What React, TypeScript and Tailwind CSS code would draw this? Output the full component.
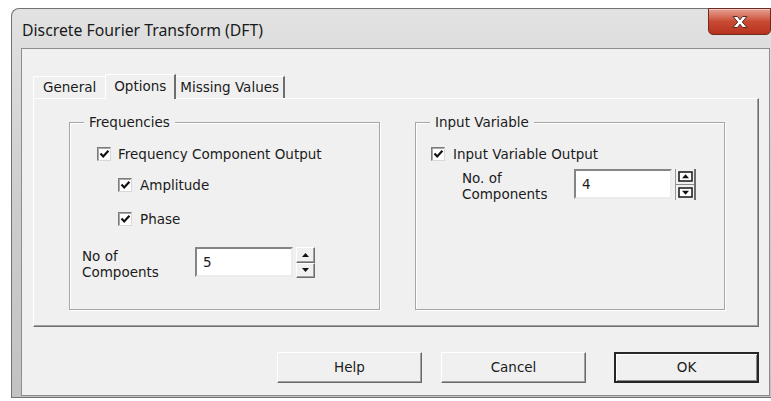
import React from "react";

const ui = "font-['DejaVu_Sans',sans-serif] text-[13.5px] text-[#1b1b1b]";

function CheckBox({ label, gap = "gap-[7px]" }: { label: string; gap?: string }) {
  return (
    <div className={`flex items-center h-[14px] ${gap}`}>
      <div className="w-[14px] h-[14px] shrink-0 bg-white border border-t-[#7b7b7b] border-l-[#7b7b7b] border-r-[#d8d8d8] border-b-[#d8d8d8] shadow-[inset_1px_1px_0_#a8a8a8] flex items-center justify-center">
        <svg width="11" height="10" viewBox="0 0 11 10">
          <path d="M1.5 4.6 L4.2 7.4 L9.4 1.8" fill="none" stroke="#111" strokeWidth="2.2" />
        </svg>
      </div>
      <span className="whitespace-nowrap leading-[16px]">{label}</span>
    </div>
  );
}

function NumberBox({ value }: { value: string }) {
  return (
    <div className="w-[98px] h-[30px] bg-white border-2 border-t-[#858585] border-l-[#858585] border-r-[#ececec] border-b-[#ececec] flex items-center pl-[6px]">
      {value}
    </div>
  );
}

// plain arrows, as drawn by the stock spin control
function SpinPlain() {
  const half =
    "flex-1 flex items-center justify-center bg-[#f0f0f0] border border-t-white border-l-white border-r-[#6d6d6d] border-b-[#6d6d6d] shadow-[inset_-1px_-1px_0_#a0a0a0]";
  return (
    <div className="w-[19px] h-[31px] flex flex-col">
      <div className={half}>
        <svg width="7" height="4" viewBox="0 0 7 4">
          <path d="M3.5 0 L7 4 L0 4 Z" fill="#111" />
        </svg>
      </div>
      <div className={half}>
        <svg width="7" height="4" viewBox="0 0 7 4">
          <path d="M0 0 L7 0 L3.5 4 Z" fill="#111" />
        </svg>
      </div>
    </div>
  );
}

// boxed arrows, the themed variant on the right-hand group
function SpinBoxed() {
  const half = "flex-1 flex items-center justify-center";
  return (
    <div className="w-[21px] h-[31px] flex flex-col border-l border-[#9a9a9a] border-r-2 border-r-[#6d6d6d]">
      <div className={half}>
        <svg width="15" height="11" viewBox="0 0 15 11">
          <rect x="1" y="1" width="13" height="9" fill="#fff" stroke="#222" strokeWidth="1.6" />
          <path d="M7.5 3.2 L11 7.2 L4 7.2 Z" fill="#111" />
        </svg>
      </div>
      <div className="h-px bg-[#8a8a8a]" />
      <div className={half}>
        <svg width="15" height="11" viewBox="0 0 15 11">
          <rect x="1" y="1" width="13" height="9" fill="#fff" stroke="#222" strokeWidth="1.6" />
          <path d="M4 3.8 L11 3.8 L7.5 7.8 Z" fill="#111" />
        </svg>
      </div>
    </div>
  );
}

function GroupBox({ title, width, children }: { title: string; width: string; children: React.ReactNode }) {
  return (
    <div className={`relative h-[188px] ${width} border border-[#a6a6a6] shadow-[inset_1px_1px_0_#fff,1px_1px_0_#fff]`}>
      <span className="absolute -top-[9px] left-[14px] px-[5px] bg-[#f0f0f0] leading-[17px]">{title}</span>
      {children}
    </div>
  );
}

function DialogButton({ label, primary = false }: { label: string; primary?: boolean }) {
  return (
    <button
      className={
        primary
          ? "w-[145px] h-[31px] bg-[#f0f0f0] border-2 border-[#262626] shadow-[inset_1px_1px_0_#fff,inset_-1px_-1px_0_#8a8a8a]"
          : "w-[145px] h-[31px] bg-[#f0f0f0] border border-t-white border-l-white border-r-[#6a6a6a] border-b-[#6a6a6a] shadow-[inset_-1px_-1px_0_#a0a0a0]"
      }
    >
      {label}
    </button>
  );
}

export default function App() {
  return (
    <div className={`w-[771px] h-[401px] bg-white pt-[8px] pl-[11px] overflow-hidden ${ui}`}>
      <div className="h-[390px] flex flex-col rounded-tl-[8px] border border-r-0 border-[#727272] bg-gradient-to-b from-[#e2e2e2] via-[#cdcdcd] to-[#c2c2c2]">
        {/* title bar */}
        <div className="h-[39px] flex items-start">
          <span className="pl-[10px] pt-[10px] font-['Noto_Sans',sans-serif] text-[15.8px] leading-[22px] text-[#1a1a1a]">
            Discrete Fourier Transform (DFT)
          </span>
          <div className="ml-auto -mt-px w-[63px] h-[27px] rounded-b-[5px] border border-[#6e2a20] bg-gradient-to-b from-[#e7a294] via-[#c94a33] to-[#b7321e] flex items-center justify-center shadow-[inset_0_1px_0_#f3c7bd]">
            <svg width="18" height="14" viewBox="0 0 18 14">
              <path
                d="M2 1.5 H6.5 L9 4.8 L11.5 1.5 H16 L11.3 7 L16 12.5 H11.5 L9 9.2 L6.5 12.5 H2 L6.7 7 Z"
                fill="#fff"
                stroke="#5a2a22"
                strokeWidth="1"
                strokeLinejoin="round"
              />
            </svg>
          </div>
        </div>

        {/* client area */}
        <div className="flex-1 ml-[9px] mr-px mb-px bg-[#f0f0f0] border border-[#8d8d8d] flex flex-col">
          {/* tabs */}
          <div className="pt-[24px] pl-[11px] flex items-end h-[49px]">
            <div className="h-[22px] px-[9px] border-t border-l border-white flex items-center">General</div>
            <div className="h-[25px] px-[8px] border-t border-l border-white border-r-2 border-r-[#6d6d6d] flex items-start pt-[1px] -mb-px bg-[#f0f0f0] relative z-10">
              Options
            </div>
            <div className="h-[22px] px-[4px] border-t border-white border-r-2 border-r-[#6d6d6d] flex items-center">
              Missing Values
            </div>
          </div>

          {/* tab page */}
          <div className="ml-[11px] mr-[10px] h-[229px] border border-t-white border-l-white border-r-[#6d6d6d] border-b-[#6d6d6d] shadow-[inset_-1px_-1px_0_#a0a0a0] flex pt-[23px] pl-[35px] gap-[35px]">
            <GroupBox title="Frequencies" width="w-[311px]">
              <div className="flex flex-col">
                <div className="mt-[24px] ml-[27px]">
                  <CheckBox label="Frequency Component Output" />
                </div>
                <div className="mt-[17px] ml-[48px]">
                  <CheckBox label="Amplitude" gap="gap-[8px]" />
                </div>
                <div className="mt-[20px] ml-[48px]">
                  <CheckBox label="Phase" gap="gap-[8px]" />
                </div>
                <div className="mt-[21px] ml-[12px] flex items-start">
                  <div className="w-[113px] leading-[16px] pt-[1px]">
                    No of
                    <br />
                    Compoents
                  </div>
                  <NumberBox value="5" />
                  <div className="ml-[3px]">
                    <SpinPlain />
                  </div>
                </div>
              </div>
            </GroupBox>

            <GroupBox title="Input Variable" width="w-[310px]">
              <div className="flex flex-col">
                <div className="mt-[24px] ml-[15px]">
                  <CheckBox label="Input Variable Output" gap="gap-[8px]" />
                </div>
                <div className="mt-[8px] ml-[46px] flex items-start">
                  <div className="w-[112px] leading-[16px] pt-[1px]">
                    No. of
                    <br />
                    Components
                  </div>
                  <NumberBox value="4" />
                  <div className="ml-[3px]">
                    <SpinBoxed />
                  </div>
                </div>
              </div>
            </GroupBox>
          </div>

          {/* buttons */}
          <div className="mt-[25px] pr-[10px] flex justify-end">
            <DialogButton label="Help" />
            <div className="w-[19px]" />
            <DialogButton label="Cancel" />
            <div className="w-[28px]" />
            <DialogButton label="OK" primary />
          </div>
        </div>
      </div>
    </div>
  );
}
